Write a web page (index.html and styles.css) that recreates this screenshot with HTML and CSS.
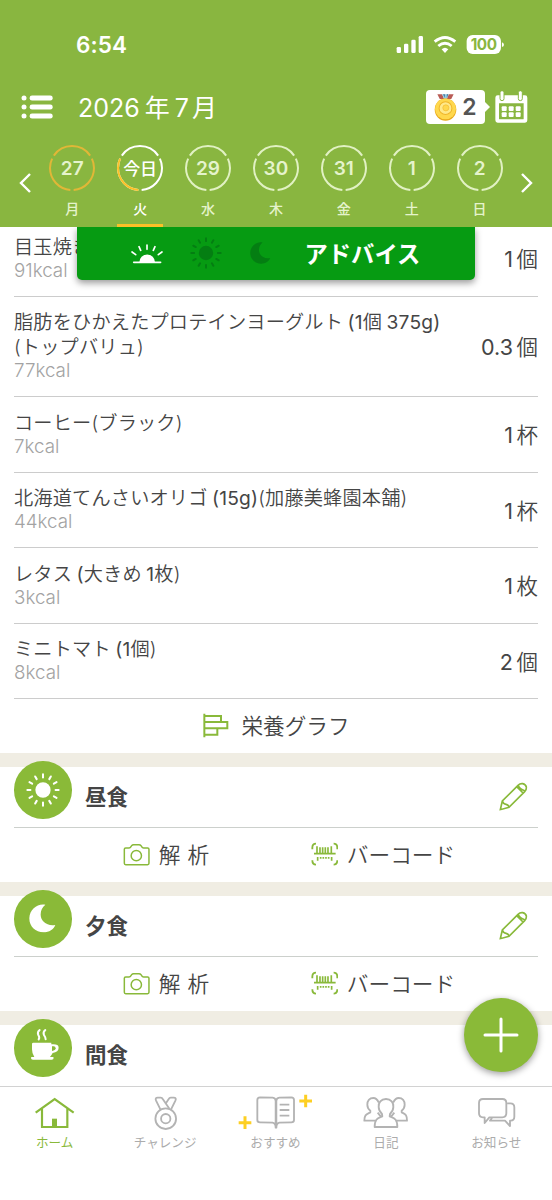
FILE: index.html
```html
<!DOCTYPE html>
<html lang="ja">
<head>
<meta charset="utf-8">
<title>食事記録</title>
<link rel="stylesheet" href="styles.css">
</head>
<body>
<svg class="defs" aria-hidden="true">
  <defs>
    <symbol id="sun" viewBox="0 0 100 100">
      <circle cx="50" cy="50" r="22.500"/>
      <g fill="none" stroke="currentColor" stroke-width="6" stroke-linecap="round">
        <path d="M50 4v9M50 87v9M4 50h9M87 50h9M27 10.200l4.500 7.800M68.500 82l4.500 7.800M10.200 27l7.800 4.500M82 68.500l7.800 4.500M73 10.200l-4.500 7.800M31.500 82l-4.500 7.800M10.200 73l7.800-4.500M82 31.500l7.800-4.500"/>
      </g>
    </symbol>
    <symbol id="moon" viewBox="0 0 80 86"><path d="M49 2C27-3 2 15 1 42C0 67 20 85 43 85C61 85 74 76 79 63C53 68 34 50 35 31C35 19 40 9 49 2Z"/></symbol>
    <symbol id="camera" viewBox="370 458 82 70">
      <path d="M378 473h10q4 0 6-4l2-3q2-3 6-3h16q4 0 6 3l2 3q2 4 6 4h12q4 0 4 4v42q0 4-4 4h-66q-4 0-4-4v-42q0-4 4-4z"/>
      <circle cx="410" cy="496" r="15.500"/>
    </symbol>
    <symbol id="barcode" viewBox="106 458 82 72">
      <path stroke-width="5.500" d="M110 480v-5q0-12 11-12M174 463q11 0 11 12v5M110 513q0 13 11 13M185 513q0 13-11 13"/>
      <path stroke-width="5.500" d="M115 493h65"/>
      <path stroke-width="5" d="M124 471v20M133 474v17M141 474v17M149 474v17M157 474v17M167 471v20M126 503v11M135 503v5M143 503v5M151 503v5M159 503v5M168 503v11"/>
    </symbol>
    <symbol id="pencil" viewBox="670 278 86 86">
      <path d="M674 361l6-26 47-47q6-6 14-5 9 2 11 10 1 8-5 14l-47 47zM680 335q3 9 11 10 8 2 9 9M723 292l19 19M727 288q5 11 20 16"/>
    </symbol>
  </defs>
</svg>
<div class="app">
  <header class="header">
    <div class="status">
      <span class="time">6:54</span>
      <svg class="signals" viewBox="358 42 328 62">
        <g fill="#fff">
          <rect x="360" y="81" width="13" height="18" rx="4"/><rect x="382" y="71" width="13" height="28" rx="4"/><rect x="404" y="59" width="13" height="40" rx="4"/><rect x="426" y="48" width="13" height="51" rx="4"/>
          <path d="M505 99l-10-11q10-9 20 0z"/>
          <path d="M676 67q6 2 6 7t-6 7z"/><rect x="570" y="45" width="103" height="57" rx="18"/>
        </g>
        <path d="M474 65q31-25 62 0M485 78q20-17 40 0" fill="none" stroke="#fff" stroke-width="8.500"/>
        <text class="battery" x="621" y="89.500" text-anchor="middle">100</text>
      </svg>
    </div>
    <div class="titlebar">
      <svg class="menu" viewBox="64 226 96 72"><g fill="#fff"><circle cx="73" cy="235" r="7.500"/><circle cx="73" cy="262" r="7.500"/><circle cx="73" cy="289" r="7.500"/><rect x="90" y="227.500" width="69" height="15" rx="7"/><rect x="90" y="254.500" width="69" height="15" rx="7"/><rect x="90" y="281.500" width="69" height="15" rx="7"/></g></svg>
      <h1 class="title"><span>2026</span><span>年</span><span>7<i>月</i></span></h1>
      <div class="badge">
        <svg class="medal" viewBox="474 224 68 80">
          <path d="M484 225h14l6 14h-13z" fill="#b85b55"/><path d="M498 225h20l-6 14h-8z" fill="#8ecbe1"/><path d="M518 225h14l-7 14h-13z" fill="#b85b55"/><path d="M501 225h5v10zM516 225h-4v10z" fill="#426d99"/>
          <ellipse cx="508" cy="270" rx="32" ry="33" fill="#e9a91c"/><ellipse cx="508" cy="268" rx="31" ry="31" fill="#ffd84d"/><circle cx="508" cy="266" r="19" fill="#ffe98a" stroke="#efb52a" stroke-width="3"/><circle cx="509" cy="265" r="9" fill="#ffd84e" stroke="#f3bb31" stroke-width="2"/>
        </svg>
        <b>2</b>
      </div>
      <svg class="calendar" viewBox="656 213 98 97"><path fill="#fff" fill-rule="evenodd" d="M664 226h82q7 0 7 7v68q0 7-7 7h-82q-7 0-7-7v-68q0-7 7-7zM668 250v46q0 2 2 2h70q2 0 2-2v-46z"/><g fill="#fff" stroke="#89b640" stroke-width="3"><rect x="671" y="212" width="12" height="30" rx="6"/><rect x="726" y="212" width="12" height="30" rx="6"/></g><g fill="#fff"><rect x="676" y="259" width="15" height="14" rx="3"/><rect x="697" y="259" width="15" height="14" rx="3"/><rect x="718" y="259" width="15" height="14" rx="3"/><rect x="676" y="277" width="15" height="14" rx="3"/><rect x="697" y="277" width="15" height="14" rx="3"/><rect x="718" y="277" width="15" height="14" rx="3"/></g></svg>
    </div>
    <div class="week">
      <svg class="chev" viewBox="0 0 12 20"><path d="M11 1L2 10l9 9"/></svg>
      <div class="day done"><div class="ring"><svg viewBox="0 0 46 46"><circle class="arcs" pathLength="360" cx="23" cy="23" r="22"/></svg><span>27</span></div><em>月</em></div>
      <div class="day today"><div class="ring"><svg viewBox="0 0 46 46"><circle class="arcs" pathLength="360" cx="23" cy="23" r="22"/><circle class="arc-part" pathLength="360" cx="23" cy="23" r="22"/></svg><span>今日</span></div><em>火</em></div>
      <div class="day"><div class="ring"><svg viewBox="0 0 46 46"><circle class="arcs" pathLength="360" cx="23" cy="23" r="22"/></svg><span>29</span></div><em>水</em></div>
      <div class="day"><div class="ring"><svg viewBox="0 0 46 46"><circle class="arcs" pathLength="360" cx="23" cy="23" r="22"/></svg><span>30</span></div><em>木</em></div>
      <div class="day"><div class="ring"><svg viewBox="0 0 46 46"><circle class="arcs" pathLength="360" cx="23" cy="23" r="22"/></svg><span>31</span></div><em>金</em></div>
      <div class="day"><div class="ring"><svg viewBox="0 0 46 46"><circle class="arcs" pathLength="360" cx="23" cy="23" r="22"/></svg><span>1</span></div><em>土</em></div>
      <div class="day"><div class="ring"><svg viewBox="0 0 46 46"><circle class="arcs" pathLength="360" cx="23" cy="23" r="22"/></svg><span>2</span></div><em>日</em></div>
      <svg class="chev" viewBox="0 0 12 20"><path d="M1 1l9 9-9 9"/></svg>
    </div>
    <div class="advice">
      <svg class="sunrise" viewBox="394 322 96 64"><g fill="none" stroke="#fff" stroke-width="5" stroke-linecap="round"><path d="M402 380h81M442 328v13M418 333l5 11M466 333l-5 11M397 349l11 8M487 349l-11 8"/></g><path fill="#fff" d="M419 380a23.500 23.500 0 0 1 47 0z"/></svg>
      <svg class="advice-sun"><use href="#sun"/></svg>
      <svg class="advice-moon"><use href="#moon"/></svg>
      <strong>アドバイス</strong>
    </div>
  </header>

  <main class="content">
    <ul class="foods">
      <li><div class="food"><p>目玉焼き</p><small>91kcal</small></div><span class="qty"><i>1</i>個</span></li>
      <li class="tall"><div class="food"><p>脂肪をひかえたプロテインヨーグルト<i class="sp">(1</i>個<i class="sp">375g)</i><br>(トップバリュ)</p><small>77kcal</small></div><span class="qty"><i>0.3</i>個</span></li>
      <li><div class="food"><p>コーヒー(ブラック)</p><small>7kcal</small></div><span class="qty"><i>1</i>杯</span></li>
      <li><div class="food"><p>北海道てんさいオリゴ<i class="sp">(15g)</i>(加藤美蜂園本舗)</p><small>44kcal</small></div><span class="qty"><i>1</i>杯</span></li>
      <li><div class="food"><p>レタス<i class="sp">(</i>大きめ<i class="sp">1</i>枚)</p><small>3kcal</small></div><span class="qty"><i>1</i>枚</span></li>
      <li><div class="food"><p>ミニトマト<i class="sp">(1</i>個)</p><small>8kcal</small></div><span class="qty"><i>2</i>個</span></li>
    </ul>
    <div class="graph">
      <svg viewBox="610 70 78 76"><path d="M614 72v71M614 79h50v18h-50M614 97h69v19h-69M653 116v19h-39"/></svg>
      <span>栄養グラフ</span>
    </div>

    <section class="meal">
      <div class="meal-head"><span class="disc"><svg class="i-sun"><use href="#sun"/></svg></span><h2>昼食</h2><svg class="pencil"><use href="#pencil"/></svg></div>
      <div class="actions"><a><svg class="camera"><use href="#camera"/></svg><span class="scan">解 析</span></a><a><svg class="barcode"><use href="#barcode"/></svg><span>バーコード</span></a></div>
    </section>
    <section class="meal">
      <div class="meal-head"><span class="disc"><svg class="i-moon"><use href="#moon"/></svg></span><h2>夕食</h2><svg class="pencil"><use href="#pencil"/></svg></div>
      <div class="actions"><a><svg class="camera"><use href="#camera"/></svg><span class="scan">解 析</span></a><a><svg class="barcode"><use href="#barcode"/></svg><span>バーコード</span></a></div>
    </section>
    <section class="meal">
      <div class="meal-head"><span class="disc"><svg class="i-cup" viewBox="88 448 88 98"><path fill="#fff" d="M94 496q0-4 4-4h54v5h6q16 0 16 10 0 13-18 16-4 8-8 12h9q2 0 2 3 0 5-6 5h-56q-6 0-6-5 0-3 2-3h8q-7-9-7-23z"/><path class="cup-hole" d="M154 503h5q6 0 6 6 0 6-11 8z"/><path fill="none" stroke="#fff" stroke-width="6" stroke-linecap="round" d="M117 454q-8 6-4 15 5 7 1 13M134 454q-8 6-4 15 5 7 5 13"/></svg></span><h2>間食</h2></div>
    </section>
  </main>

  <button class="fab" aria-label="追加"><svg viewBox="0 0 36 36"><path d="M18 2v32M2 18h32"/></svg></button>

  <nav class="tabs">
    <a class="active"><svg viewBox="99 45 132 105"><path d="M107 95L164 54l57 41M126 82v56h76V82"/><rect x="156" y="113" width="15" height="25" fill="currentColor" stroke="none"/></svg><span>ホーム</span></a>
    <a><svg viewBox="430.800 45 132 105"><circle cx="496" cy="113" r="31"/><circle cx="496" cy="113" r="14"/><path d="M480 85l-13-26q-4-9 5-9h9q4 0 6 4l20 29M512 85l13-26q4-9-5-9h-9q-4 0-6 4l-8 12"/></svg><span>チャレンジ</span></a>
    <a><svg viewBox="762 45 132 105"><path d="M827 60q0-9-9-10l-38-1q-8 0-8 8v60q0 7 8 7l38 1q9 2 9 15zM829 60q0-9 9-10l36-1q8 0 8 8v60q0 7-8 7l-36 1q-9 2-9 15z"/><path d="M839 71h29M839 87h29M839 104h29"/><g class="plus"><path d="M917 41v38M898 60h38M735 106v38M716 125h38"/></g></svg><span>おすすめ</span></a>
    <a><svg viewBox="265 45 132 105"><path d="M331 54c-15 0-23 11-22 24 0 11 5 16 10 21l1 7c-14 6-23 7-23 32h68c0-25-9-26-23-32l1-7c5-5 10-10 10-21 1-13-7-24-22-24zM309 64c-4-9-10-13-16-13-12 0-18 9-18 20 0 9 4 14 9 18v5c-12 6-18 7-18 25h34M353 64c4-9 10-13 16-13 12 0 18 9 18 20 0 9-4 14-9 18v5c12 6 16 7 16 25h-34M306 95l9 11M356 95l-9 11"/></svg><span>日記</span></a>
    <a><svg viewBox="596 45 132 105"><path d="M620 54h58q12 0 12 12v31q0 12-12 12h-39l-14 17v-17h-5q-12 0-12-12V66q0-12 12-12zM693 67h9q12 0 12 12v28q0 11-11 12h-2v16l-15-16h-45l6-8"/></svg><span>お知らせ</span></a>
  </nav>
</div>
</body>
</html>
```
FILE: styles.css
```css
* { box-sizing: border-box; margin: 0; padding: 0; }
body { width: 552px; height: 1200px; overflow: hidden; background: #fff; color: #454545; font-family: Inter, "Noto Sans CJK JP", sans-serif; }
i, em { font-style: normal; }
.defs { position: absolute; width: 0; height: 0; }
.app { position: relative; display: flex; flex-direction: column; height: 1200px; }

.header { position: relative; z-index: 2; flex: none; height: 227px; background: #89b640; color: #fff; }
.status { display: flex; align-items: center; justify-content: space-between; height: 68px; padding: 21px 48px 0 76px; }
.time { font-size: 22.500px; font-weight: 600; letter-spacing: 0.100px; }
.signals { width: 109.300px; height: 20.700px; margin-right: -1px; }
.battery { fill: #89b640; font-size: 46px; font-weight: 700; letter-spacing: -1.500px; }
.titlebar { display: flex; align-items: center; height: 78px; padding: 2px 24px 2px 21px; }
.menu { width: 32px; height: 24px; }
.title { display: flex; gap: 5px; margin: 2px 0 0 25px; font-size: 25px; font-weight: 400; line-height: 36px; }
.title i { margin-left: 3px; }
.badge { position: relative; display: flex; align-items: center; gap: 5px; width: 59px; height: 34px; margin-left: auto; padding-left: 8px; border-radius: 4px; background: #fff; }
.badge::after { content: ""; position: absolute; left: 58px; top: 11px; border: 6px solid transparent; border-left-color: #fff; border-right: 0; }
.badge b { color: #555; font-size: 23px; font-weight: 600; }
.medal { width: 23px; height: 27px; }
.calendar { width: 32.700px; height: 32.300px; margin-left: 10px; }
.week { display: flex; height: 81px; padding: 0 19px; }
.chev { flex: none; width: 12px; height: 20px; margin-top: 26.500px; fill: none; stroke: #fff; stroke-width: 2.400; }
.week .chev:first-child { margin-right: 7.300px; }
.week .chev:last-child { margin-left: auto; }
.day { position: relative; width: 67.900px; display: flex; flex-direction: column; align-items: center; color: #e5f3cc; }
.ring { display: grid; place-items: center; width: 46px; height: 45px; margin-top: -1px; font-size: 19px; font-weight: 600; }
.ring > * { grid-area: 1 / 1; }
.ring svg { width: 46px; height: 46px; }
.arcs, .arc-part { fill: none; stroke: #e1f1c3; stroke-width: 2; stroke-dasharray: 111 9; stroke-dashoffset: -94.500; }
.done .arcs { stroke: #e1b737; }
.arc-part { stroke-dasharray: 111 249; }
.today { color: #fff; }
.today .arcs { stroke: #fff; }
.today .arc-part { stroke: #fcc127; }
.today .ring { font-size: 17px; font-weight: 500; }
.today .ring span { margin-top: -2px; }
.day em { margin-top: 9px; font-size: 14px; line-height: 20px; font-weight: 500; }
.today::after { content: ""; position: absolute; bottom: 0; width: 46px; height: 3px; background: #fcc127; }
.advice { position: absolute; left: 77px; top: 227px; display: flex; align-items: center; width: 398px; height: 52.500px; padding-left: 54px; border-radius: 0 0 5px 5px; background: #069b12; color: #047e12; box-shadow: 0 3px 7px rgba(0,0,0,.4); clip-path: inset(0 -15px -20px -15px); }
.sunrise { width: 32px; height: 21.300px; }
.advice-sun { width: 32px; height: 32px; margin-left: 27px; fill: currentColor; }
.advice-moon { width: 20.500px; height: 22px; margin-left: 28px; fill: currentColor; }
.advice strong { margin-left: 34px; color: #fff; font-size: 23.300px; font-weight: 700; }

.content { flex: none; height: 858.500px; overflow: hidden; }
.foods { list-style: none; margin: -6px 14px 0; }
.foods li { display: flex; align-items: center; justify-content: space-between; height: 75.500px; border-bottom: 1px solid #ccc; }
.foods .tall { height: 100.500px; }
.food { padding-top: 1px; }
.food p { font-size: 19.200px; line-height: 24.300px; font-weight: 350; letter-spacing: 0.170px; white-space: nowrap; }
.food i, .qty i { font-weight: 400; }
.food small { display: block; color: #a3a3a3; font-size: 18.800px; line-height: 24px; font-weight: 300; }
.sp { margin-left: 4.500px; }
.qty { margin-top: -1px; font-size: 21.500px; font-weight: 350; white-space: nowrap; }
.qty i { margin-right: 3.500px; }
.graph { display: flex; align-items: center; justify-content: center; gap: 13px; height: 54px; font-size: 21.600px; font-weight: 350; }
.graph span { margin-top: -3px; }
.graph svg { width: 26px; height: 25.300px; fill: none; stroke: #89b93a; stroke-width: 6; }
.meal { border-top: 14px solid #f0ede3; }
.meal-head { display: flex; align-items: center; height: 60.500px; margin: 0 14px; border-bottom: 1px solid #ccd0cc; }
.meal:last-child .meal-head { border-bottom-color: transparent; }
.disc { display: grid; place-items: center; width: 57.500px; height: 57.500px; margin-top: -14px; border-radius: 50%; background: #8aba38; color: #fff; }
.disc svg { fill: #fff; }
.i-sun { width: 34px; height: 34px; }
.i-moon { width: 26.700px; height: 28.700px; }
.i-cup { width: 29.300px; height: 32.700px; margin: -6px 0 0 3px; }
.cup-hole { fill: #8aba38; }
.meal h2 { margin: 1px 0 0 13.500px; font-size: 21.500px; font-weight: 700; line-height: 30px; }
.pencil { width: 28.700px; height: 28.700px; margin-left: auto; margin-right: 10px; fill: none; stroke: #89b93a; stroke-width: 5; }
.actions { display: flex; height: 54.500px; padding-left: 123px; font-size: 21.700px; font-weight: 350; }
.actions a { display: flex; align-items: center; gap: 8.500px; width: 188px; white-space: nowrap; }
.actions span { margin-top: -2px; }
.camera, .barcode { margin-top: -1px; }
.camera { width: 27.300px; height: 23.300px; fill: none; stroke: #89b93a; stroke-width: 4.500; }
.barcode { width: 27.300px; height: 24px; fill: none; stroke: #89b93a; }
.scan { letter-spacing: 0.500px; }

.fab { position: absolute; z-index: 3; left: 464px; top: 998px; display: grid; place-items: center; width: 74px; height: 74px; border: 0; border-radius: 50%; background: #8aba38; box-shadow: 0 2px 7px rgba(0,0,0,.4); }
.fab svg { width: 36px; height: 36px; fill: none; stroke: #fff; stroke-width: 3; stroke-linecap: round; }
.tabs { display: grid; grid-template-columns: repeat(5, 1fr); flex: 1; border-top: 1px solid #d2d2d2; background: #fff; color: #acacac; }
.tabs a { display: flex; flex-direction: column; align-items: center; padding-top: 9px; }
.tabs svg { width: 44px; height: 35px; overflow: visible; fill: none; stroke: #b3b3b3; stroke-width: 5.500; stroke-linejoin: round; }
.tabs span { margin: 3px 1px 0 0; font-size: 12.600px; line-height: 18px; }
.tabs .active { color: #89b93a; }
.tabs .active svg { stroke: #89b93a; stroke-width: 6.500; stroke-linejoin: miter; }
.tabs .plus { stroke: #fdcf23; stroke-width: 9; }
```
